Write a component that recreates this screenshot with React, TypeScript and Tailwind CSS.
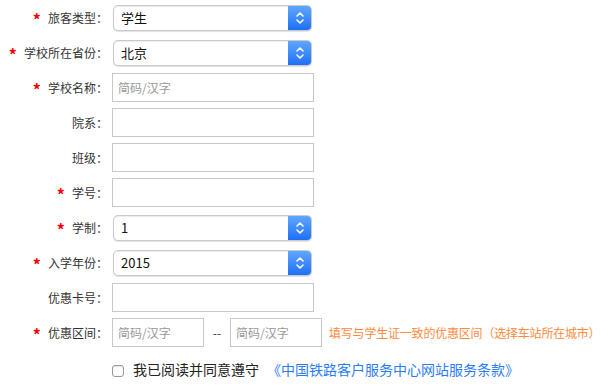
import React from "react";

const font = { fontFamily: '"Noto Sans CJK SC", "Noto Sans", sans-serif' };

function Label({ text, req }: { text: string; req?: boolean }) {
  return (
    <div className="w-[108px] shrink-0 flex justify-end items-center text-[12px] text-[#333]">
      {req && <span className="text-[#f00] text-[16px] font-bold mr-[7px] leading-none mt-[3px]">*</span>}
      <span>{text}：</span>
    </div>
  );
}

function Select({ value }: { value: string }) {
  return (
    <div className="ml-[5px] flex w-[199px] h-[26px] rounded-[5px] border border-[#c9c9c9] bg-white shadow-[inset_0_1px_1px_rgba(0,0,0,0.08),0_1px_1px_rgba(0,0,0,0.12)] overflow-hidden">
      <div className="flex-1 flex items-center pl-[7px] text-[13px] text-[#111]">{value}</div>
      <div className="w-[23px] h-full bg-gradient-to-b from-[#5ea7ff] to-[#1e6ff5] flex items-center justify-center">
        <svg width="10" height="16" viewBox="0 0 10 16" fill="none" stroke="white" strokeWidth="1.6" strokeLinecap="round" strokeLinejoin="round">
          <path d="M2 6 L5 3 L8 6" />
          <path d="M2 10 L5 13 L8 10" />
        </svg>
      </div>
    </div>
  );
}

function Input({ placeholder, w = "w-[202px]" }: { placeholder?: string; w?: string }) {
  return (
    <input
      className={`${w} h-[29px] border border-[#c8c8c8] bg-white px-[5px] text-[12px] text-[#333] placeholder:text-[#999] outline-none`}
      placeholder={placeholder}
      style={font}
    />
  );
}

function Row({ children }: { children: React.ReactNode }) {
  return <div className="h-[35px] flex items-center">{children}</div>;
}

export default function App() {
  return (
    <div className="w-[602px] h-[389px] bg-white overflow-hidden" style={font}>
      <Row>
        <Label text="旅客类型" req />
        <Select value="学生" />
      </Row>
      <Row>
        <Label text="学校所在省份" req />
        <Select value="北京" />
      </Row>
      <Row>
        <Label text="学校名称" req />
        <div className="ml-[4px]"><Input placeholder="简码/汉字" /></div>
      </Row>
      <Row>
        <Label text="院系" />
        <div className="ml-[4px]"><Input /></div>
      </Row>
      <Row>
        <Label text="班级" />
        <div className="ml-[4px]"><Input /></div>
      </Row>
      <Row>
        <Label text="学号" req />
        <div className="ml-[4px]"><Input /></div>
      </Row>
      <Row>
        <Label text="学制" req />
        <Select value="1" />
      </Row>
      <Row>
        <Label text="入学年份" req />
        <Select value="2015" />
      </Row>
      <Row>
        <Label text="优惠卡号" />
        <div className="ml-[4px]"><Input /></div>
      </Row>
      <Row>
        <Label text="优惠区间" req />
        <div className="ml-[4px] flex items-center">
          <Input placeholder="简码/汉字" w="w-[92px]" />
          <span className="w-[26px] text-center text-[12px] text-[#333]">--</span>
          <Input placeholder="简码/汉字" w="w-[92px]" />
          <span className="ml-[7px] text-[12px] tracking-[-0.2px] text-[#ff8a3d] whitespace-nowrap">填写与学生证一致的优惠区间（选择车站所在城市）</span>
        </div>
      </Row>
      <div className="h-[35px] flex items-center pl-[112px] pt-[3px]">
        <span className="w-[12px] h-[12px] rounded-[3px] border border-[#999] bg-white shadow-[inset_0_1px_1px_rgba(0,0,0,0.1)] mt-[4px]" />
        <span className="ml-[9px] text-[14px] text-[#222]">我已阅读并同意遵守</span>
        <span className="ml-[8px] text-[14px] text-[#2b7cf6]">《中国铁路客户服务中心网站服务条款》</span>
      </div>
    </div>
  );
}
